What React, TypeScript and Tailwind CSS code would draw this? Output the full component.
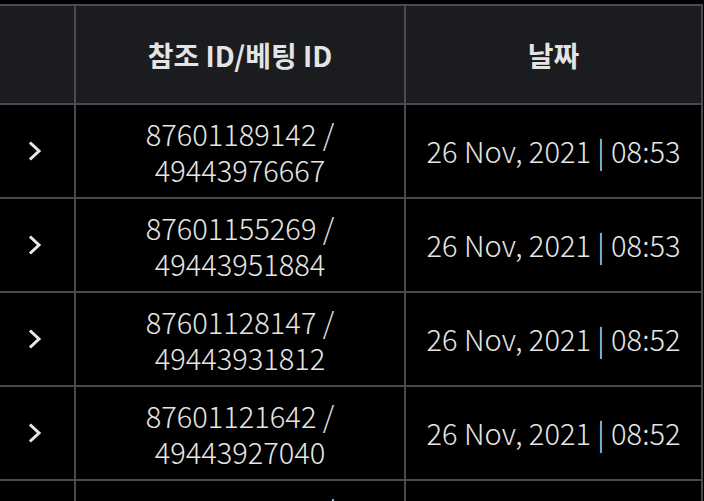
import React from 'react'

interface BetRow {
  refId: string
  betId: string
  date: string
}

const rows: BetRow[] = [
  { refId: '87601189142', betId: '49443976667', date: '26 Nov, 2021 | 08:53' },
  { refId: '87601155269', betId: '49443951884', date: '26 Nov, 2021 | 08:53' },
  { refId: '87601128147', betId: '49443931812', date: '26 Nov, 2021 | 08:52' },
  { refId: '87601121642', betId: '49443927040', date: '26 Nov, 2021 | 08:52' },
  { refId: '87601108215', betId: '49443918306', date: '26 Nov, 2021 | 08:52' },
]

const Chevron = () => (
  <svg width="14" height="20" viewBox="0 0 14 20" fill="none">
    <path d="M3 2.5 L11 10 L3 17.5" stroke="#e8e8e8" strokeWidth="3" strokeLinecap="square" />
  </svg>
)

export default function App() {
  return (
    <div
      className="w-[704px] h-[501px] overflow-hidden bg-black pt-1"
      style={{ fontFamily: '"Noto Sans CJK KR", "Noto Sans", sans-serif' }}
    >
      <div className="w-[703px] border-t-2 border-r-2 border-[#4a4b4e]">
        {/* header */}
        <div className="flex h-[99px] bg-[#1b1c1f] border-b-2 border-[#4a4b4e] text-[#e4e4e4] text-[28px] font-bold">
          <div className="w-[76px] shrink-0 border-r-2 border-[#4a4b4e]" />
          <div className="w-[330px] shrink-0 border-r-2 border-[#4a4b4e] flex items-center justify-center">
            참조 ID/베팅 ID
          </div>
          <div className="flex-1 flex items-center justify-center">날짜</div>
        </div>

        {rows.map((r) => (
          <div key={r.refId} className="flex h-[94px] border-b-2 border-[#4a4b4e] text-[#e6e6e6] text-[29px] font-light">
            <div className="w-[76px] shrink-0 border-r-2 border-[#4a4b4e] flex items-center justify-center pr-1">
              <Chevron />
            </div>
            <div className="w-[330px] shrink-0 border-r-2 border-[#4a4b4e] flex flex-col items-center justify-center leading-[36px]">
              <span>{r.refId} /</span>
              <span>{r.betId}</span>
            </div>
            <div className="flex-1 flex items-center justify-center">{r.date}</div>
          </div>
        ))}
      </div>
    </div>
  )
}
